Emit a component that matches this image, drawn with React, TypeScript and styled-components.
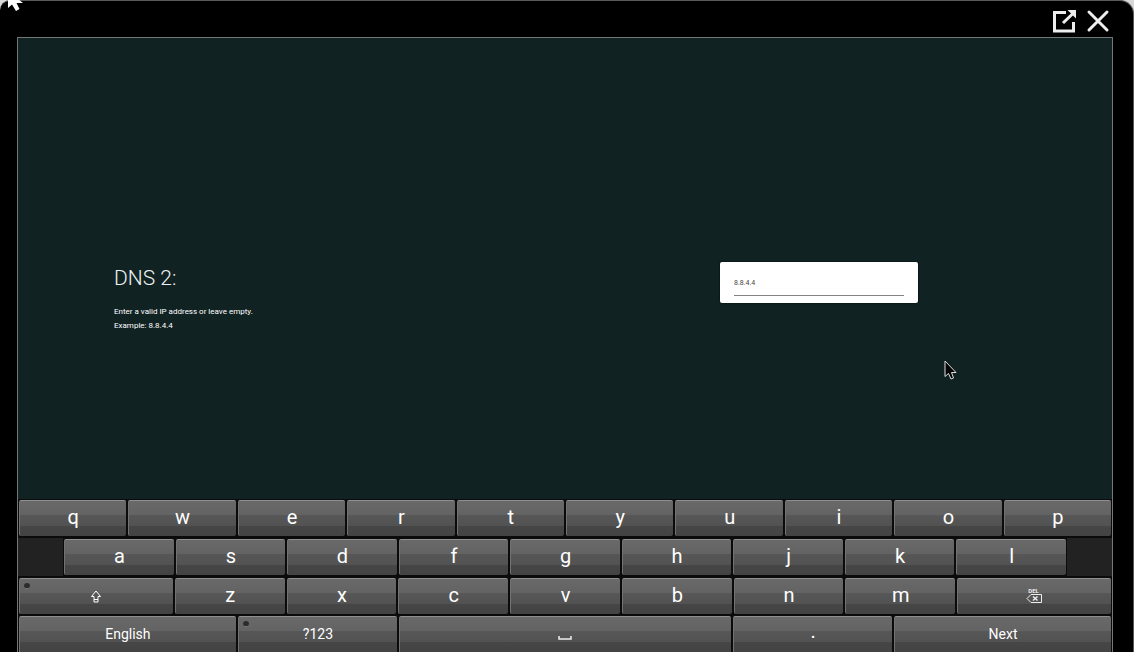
import React from "react";
import styled, { createGlobalStyle } from "styled-components";

const Global = createGlobalStyle`
  * { box-sizing: border-box; }
  body { margin: 0; background: #d8d8d8; font-family: Roboto, "Liberation Sans", sans-serif; }
  button, input { font: inherit; }
`;

const Frame = styled.div`
  position: relative;
  display: flex;
  flex-direction: column;
  min-height: 100vh;
  padding: 0 20px 0 17px;
  background: #000;
  border: solid #5a5a5a;
  border-width: 1px 1px 0 0;
  border-radius: 10px 14px 0 0;
`;

const TitleBar = styled.header`
  display: flex;
  justify-content: flex-end;
  align-items: center;
  gap: 8px;
  height: 36px;
  padding: 4px 3px 0 0;
`;

const IconButton = styled.button`
  display: flex;
  padding: 0;
  border: 0;
  background: none;
  color: #eee;
`;

const Screen = styled.main`
  flex: 1;
  display: flex;
  flex-direction: column;
  border: solid #727676;
  border-width: 1px 1px 0 1px;
  background: #112222;
`;

const Step = styled.section`
  flex: 1;
  display: grid;
  grid-template-columns: 1fr 198px;
  align-items: start;
  padding: 224px 194px 0 96px;
`;

const Title = styled.h1`
  margin: 0;
  font-size: 21px;
  line-height: 32px;
  font-weight: 300;
  color: #eef2f2;
`;

const Hint = styled.p`
  margin: 11px 0 0;
  font-size: 8px;
  line-height: 14px;
  font-weight: 400;
  color: #fff;
`;

const Field = styled.label`
  display: block;
  height: 41px;
  padding: 14px 14px 0;
  border-radius: 2px;
  background: #fff;
  box-shadow: 0 0 2px #000;
`;

const AddressInput = styled.input`
  display: block;
  width: 100%;
  height: 20px;
  padding: 0 0 6px;
  border: 0;
  border-bottom: 1px solid #858085;
  border-radius: 0;
  outline: 0;
  background: none;
  font-size: 7px;
  color: #444;
`;

const Keyboard = styled.div`
  background: #0b0b0b;
`;

const Row = styled.div<{ $last?: boolean }>`
  display: flex;
  height: ${(p) => (p.$last ? 36 : 39)}px;
`;

const Blank = styled.div`
  flex: 42 1 0;
  margin: 0 0 1px;
  background: #222;
`;

const Cell = styled.div<{ $units: number; $last?: boolean }>`
  flex: ${(p) => p.$units} 1 0;
  display: flex;
  min-width: 0;
  padding: ${(p) => (p.$last ? "0 1px" : "1px 1px 2px")};
`;

const Key = styled.button<{ $word?: boolean; $last?: boolean; $raised?: boolean }>`
  position: relative;
  flex: 1;
  display: flex;
  align-items: center;
  justify-content: center;
  min-width: 0;
  padding: 0 0 ${(p) => (p.$raised ? 8 : p.$last ? 1 : 4)}px;
  border: solid #727272;
  border-width: 1px 0 0 1px;
  border-top-color: #909090;
  border-radius: ${(p) => (p.$last ? "2px 2px 0 0" : "2px")};
  background: linear-gradient(#696969, #636363 14px, #575757 14px, #525252 25px, #464646 25px, #434343);
  color: #fff;
  font-size: ${(p) => (p.$word ? 14 : 20)}px;
  line-height: 24px;
`;

const Dot = styled.span`
  position: absolute;
  top: 4px;
  left: 4px;
  width: 6px;
  height: 6px;
  border-radius: 50%;
  background: #2c2c2c;
  border-bottom: 1px solid #777;
`;

const ShiftIcon = styled.svg`
  margin-top: 4px;
`;

const Pointer = styled.svg<{ $x: number; $y: number }>`
  position: absolute;
  left: ${(p) => p.$x}px;
  top: ${(p) => p.$y}px;
  pointer-events: none;
`;

const OpenIcon = () => (
  <svg width="26" height="26" viewBox="0 0 26 26" fill="none" stroke="currentColor" strokeWidth="3">
    <path d="M14 4.500H2.500V23H21.500V14" />
    <path d="M11 15L21 5.500" />
    <path d="M15.500 2H24V10.500Z" fill="currentColor" stroke="none" />
  </svg>
);

const CloseIcon = () => (
  <svg width="24" height="24" viewBox="0 0 24 24" fill="none" stroke="currentColor" strokeWidth="3" strokeLinecap="round">
    <path d="M3 3L21 21M21 3L3 21" />
  </svg>
);

const Shift = () => (
  <ShiftIcon width="12" height="13" viewBox="0 0 12 13" fill="none" stroke="#fff">
    <path d="M6 1L10.500 6.500H8V9.500H4V6.500H1.500Z" />
    <path d="M4 12H8V9.500H4Z" />
  </ShiftIcon>
);

const DeleteFace = styled.span`
  display: flex;
  flex-direction: column;
  align-items: center;
  gap: 1px;
  padding: 2px 2px 0 0;
  font-size: 6px;
  line-height: 5px;
  font-weight: 500;
`;

const Delete = () => (
  <DeleteFace>
    DEL
    <svg width="16" height="9" viewBox="0 0 16 9" fill="none" stroke="#eee">
      <path d="M5 .5H15.500V8.500H5L1 4.500Z" />
      <path d="M7 2.500L11.500 6.500M11.500 2.500L7 6.500" strokeWidth="1.500" />
    </svg>
  </DeleteFace>
);

const Space = () => (
  <svg width="14" height="14" viewBox="0 0 14 14" fill="none" stroke="#eee" strokeWidth="1.500">
    <path d="M1 9V12H13V9" />
  </svg>
);

type KeySpec = { face: React.ReactNode; units: number; label?: string; word?: boolean; dot?: boolean; raised?: boolean };

const letters = (text: string, units: number): KeySpec[] => text.split("").map((face) => ({ face, units }));

const rows: { keys: KeySpec[]; inset?: boolean }[] = [
  { keys: letters("qwertyuiop", 100) },
  { keys: letters("asdfghjkl", 102), inset: true },
  {
    keys: [
      { face: <Shift />, units: 143, label: "Shift", dot: true },
      ...letters("zxcvbnm", 102),
      { face: <Delete />, units: 143, label: "Delete" },
    ],
  },
  {
    keys: [
      { face: "English", units: 200, word: true },
      { face: "?123", units: 147, word: true, dot: true },
      { face: <Space />, units: 306, label: "Space" },
      { face: ".", units: 147, raised: true },
      { face: "Next", units: 200, word: true },
    ],
  },
];

export default function App() {
  return (
    <>
      <Global />
      <Frame>
        <TitleBar>
          <IconButton aria-label="Open in new window"><OpenIcon /></IconButton>
          <IconButton aria-label="Close"><CloseIcon /></IconButton>
        </TitleBar>
        <Screen>
          <Step>
            <div>
              <Title>DNS 2:</Title>
              <Hint id="dns-hint">
                Enter a valid IP address or leave empty.
                <br />
                Example: 8.8.4.4
              </Hint>
            </div>
            <Field>
              <AddressInput aria-label="DNS 2" aria-describedby="dns-hint" defaultValue="8.8.4.4" />
            </Field>
          </Step>
          <Keyboard>
            {rows.map((row, r) => {
              const last = r === rows.length - 1;
              return (
                <Row key={r} $last={last}>
                  {row.inset && <Blank />}
                  {row.keys.map((k, i) => (
                    <Cell key={i} $units={k.units} $last={last}>
                      <Key type="button" aria-label={k.label} $word={k.word} $last={last} $raised={k.raised}>
                        {k.dot && <Dot />}
                        {k.face}
                      </Key>
                    </Cell>
                  ))}
                  {row.inset && <Blank />}
                </Row>
              );
            })}
          </Keyboard>
        </Screen>
        <Pointer $x={944} $y={359} width="13" height="21" viewBox="0 0 13 21" fill="#050505" stroke="#ddd">
          <path d="M1 1V16.500L4.500 13.500L7 19L9.500 18L7.500 12.500H12Z" />
        </Pointer>
        <Pointer $x={8} $y={-10} width="15" height="20" viewBox="0 0 15 20" fill="#fff">
          <path d="M0 0V17L4 13.500L8 20L11.500 18L8.500 12H15Z" />
        </Pointer>
      </Frame>
    </>
  );
}
